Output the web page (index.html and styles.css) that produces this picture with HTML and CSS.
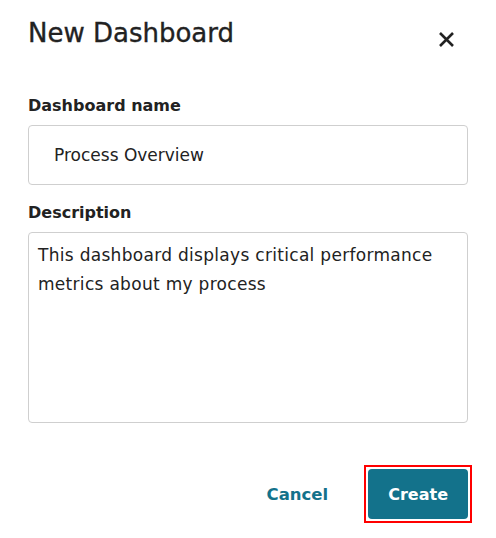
FILE: index.html
```html
<!DOCTYPE html>
<html lang="en">
<head>
<meta charset="utf-8">
<title>New Dashboard</title>
<link rel="stylesheet" href="styles.css">
</head>
<body>
<div class="dialog">
  <div class="header">
    <h1 class="title">New Dashboard</h1>
    <button class="close" type="button" aria-label="Close">
      <svg width="17" height="17" viewBox="0 0 17 17" aria-hidden="true">
        <path d="M2 2 L15 15 M15 2 L2 15" stroke="#222222" stroke-width="2.6" fill="none"/>
      </svg>
    </button>
  </div>
  <label class="field-label" for="name">Dashboard name</label>
  <input class="text-input" id="name" type="text" value="Process Overview">
  <label class="field-label desc" for="desc">Description</label>
  <textarea class="text-area" id="desc">This dashboard displays critical performance metrics about my process</textarea>
  <div class="actions">
    <button class="btn btn-cancel" type="button">Cancel</button>
    <span class="focus-ring">
      <button class="btn btn-create" type="button">Create</button>
    </span>
  </div>
</div>
</body>
</html>
```

FILE: styles.css
```css
* {
  box-sizing: border-box;
}

html, body {
  margin: 0;
  padding: 0;
  background: #ffffff;
}

body {
  font-family: "DejaVu Sans", "Liberation Sans", sans-serif;
  color: #222222;
}

.dialog {
  padding: 17px 28px 0;
}

.header {
  display: flex;
  justify-content: space-between;
  align-items: flex-start;
  height: 32px;
}

.title {
  margin: 0;
  font-size: 26px;
  line-height: 32px;
  font-weight: 400;
  color: #222222;
  -webkit-text-stroke: 0.35px #222222;
}

.close {
  background: none;
  border: 0;
  padding: 0;
  margin: 13.5px 13px 0 0;
  width: 17px;
  height: 17px;
  display: block;
  cursor: pointer;
}

.close svg {
  display: block;
}

.field-label {
  display: block;
  margin: 47px 0 9px;
  font-size: 16px;
  line-height: 20px;
  font-weight: 700;
  color: #222222;
}

.field-label.desc {
  margin-top: 18px;
}

.text-input {
  display: block;
  width: 100%;
  height: 60px;
  margin: 0;
  padding: 0 25px;
  border: 1px solid #cfcfcf;
  border-radius: 4px;
  font-family: "DejaVu Sans", "Liberation Sans", sans-serif;
  font-size: 17px;
  color: #222222;
  background: #ffffff;
  outline: none;
}

.text-area {
  display: block;
  width: 100%;
  height: 191px;
  margin: 0;
  padding: 7.5px 9px;
  border: 1px solid #cfcfcf;
  border-radius: 4px;
  font-family: "DejaVu Sans", "Liberation Sans", sans-serif;
  font-size: 17px;
  line-height: 29px;
  letter-spacing: 0.3px;
  color: #222222;
  background: #ffffff;
  resize: none;
  outline: none;
  overflow: hidden;
}

.actions {
  display: flex;
  justify-content: flex-end;
  align-items: center;
  gap: 16px;
  margin-top: 42px;
}

.focus-ring {
  display: flex;
  padding: 2px;
  border: 2px solid #ff0000;
  margin-right: -4px;
}

.btn {
  height: 50px;
  padding: 0 20px;
  border: 0;
  border-radius: 4px;
  font-family: "DejaVu Sans", "Liberation Sans", sans-serif;
  font-weight: 700;
  cursor: pointer;
}

.btn-cancel {
  background: transparent;
  color: #13728b;
  font-size: 16.5px;
}

.btn-create {
  background: #13728b;
  color: #ffffff;
  font-size: 16px;
}
```
